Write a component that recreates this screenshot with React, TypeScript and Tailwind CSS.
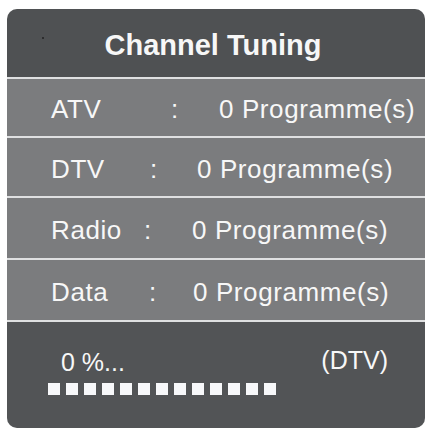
const ROWS = [
  { label: "ATV", h: "h-[57px]", labelW: "w-[120px]", colonW: "w-[48px]" },
  { label: "DTV", h: "h-[58px]", labelW: "w-[99px]", colonW: "w-[47px]" },
  { label: "Radio", h: "h-[60px]", labelW: "w-[93px]", colonW: "w-[48px]" },
  { label: "Data", h: "h-[60px]", labelW: "w-[98px]", colonW: "w-[44px]" },
];

export default function App() {
  return (
    <div
      className="h-[429px] w-[429px] bg-white pl-[7px] pt-[9px]"
      style={{ fontFamily: '"Liberation Sans", Arial, sans-serif' }}
    >
      <div className="flex w-[418px] flex-col gap-[2px] overflow-hidden rounded-[10px] bg-[#dfe0e1] text-[#f7f7f7]">
        {/* title bar */}
        <div className="relative flex h-[68px] items-center justify-center bg-[#4f5153] pr-[6px] pt-[4px]">
          <span className="absolute left-[35px] top-[28px] h-[2px] w-[2px] rounded-full bg-[#222]" />
          <span className="text-[29px] font-bold leading-[33px]">Channel Tuning</span>
        </div>

        {ROWS.map((row) => (
          <div
            key={row.label}
            className={`flex items-center bg-[#7b7c7e] pl-[44px] pt-[3px] text-[26px] leading-[30px] tracking-[0.6px] ${row.h}`}
          >
            <span className={row.labelW}>{row.label}</span>
            <span className={row.colonW}>:</span>
            <span>0 Programme(s)</span>
          </div>
        ))}

        {/* progress */}
        <div className="flex h-[106px] flex-col bg-[#525456] pt-[26px]">
          <div className="flex items-start justify-between pl-[54px] pr-[37px] text-[25px] leading-[28px]">
            <span>0 %...</span>
            <span className="-mt-[2px]">(DTV)</span>
          </div>
          <div className="mt-[7px] flex gap-[6px] pl-[41px]">
            {Array.from({ length: 13 }).map((_, i) => (
              <span key={i} className="h-[12px] w-[12px] bg-[#f7f8fa]" />
            ))}
          </div>
        </div>
      </div>
    </div>
  );
}
